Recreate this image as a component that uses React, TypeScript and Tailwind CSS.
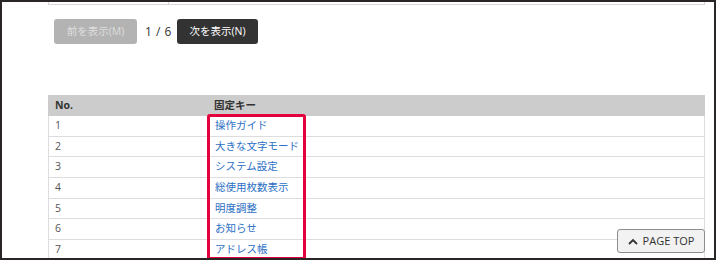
import React from "react";

const rows = [
  ["1", "操作ガイド"],
  ["2", "大きな文字モード"],
  ["3", "システム設定"],
  ["4", "総使用枚数表示"],
  ["5", "明度調整"],
  ["6", "お知らせ"],
  ["7", "アドレス帳"],
];

export default function App() {
  return (
    <div
      className="w-[718px] h-[262px] bg-white"
      style={{ fontFamily: '"Open Sans", "Noto Sans CJK JP", sans-serif' }}
    >
      <div className="relative w-[716px] h-[260px] border-2 border-[#2b2626] overflow-hidden">
        {/* remnant of the previous table */}
        <div className="ml-[46px] w-[657px] h-[3px] border-l border-r border-b border-[#d8d8d8] flex">
          <div className="w-[120px] border-r border-[#d8d8d8]" />
        </div>

        {/* pager */}
        <div className="flex items-center ml-[52px] mt-[14px] h-[25px] text-[10.5px]">
          <div className="w-[83px] h-[25px] rounded-[3px] bg-[#b3b3b3] text-[#dedede] flex items-center justify-center">
            前を表示(M)
          </div>
          <div className="ml-[8px] w-[32px] text-[#333] text-[12px] tracking-[0.5px]">1 / 6</div>
          <div className="w-[81px] h-[25px] rounded-[3px] bg-[#333333] text-white flex items-center justify-center">
            次を表示(N)
          </div>
        </div>

        {/* table */}
        <div className="relative ml-[46px] mt-[51px] w-[657px] text-[10.5px]">
          <div className="flex h-[21px] bg-[#cccccc] font-bold text-[#333]">
            <div className="w-[160px] pl-[7px] flex items-center">No.</div>
            <div className="flex-1 pl-[6px] flex items-center">固定キー</div>
          </div>
          {rows.map(([n, label]) => (
            <div
              key={n}
              className="flex h-[20.65px] border-b border-l border-r border-[#dddddd]"
            >
              <div className="w-[160px] pl-[6px] flex items-center text-[#555] border-r border-[#dddddd]">
                {n}
              </div>
              <div className="flex-1 pl-[6px] flex items-center text-[#2c6fc4]">
                {label}
              </div>
            </div>
          ))}
          <div className="absolute left-[159px] top-[19px] w-[99px] h-[146px] border-[3px] border-[#e3003c] rounded-[3px]" />
        </div>

        {/* page top */}
        <div className="absolute left-[615px] top-[227px] w-[88px] h-[24px] rounded-[3px] border border-[#8c8c8c] bg-[#f2f2f2] flex items-center justify-center gap-[5px] text-[11px] text-[#333]">
          <svg width="10" height="7" viewBox="0 0 10 7">
            <path d="M1 6 L5 2 L9 6" fill="none" stroke="#333" strokeWidth="1.8" />
          </svg>
          <span>PAGE TOP</span>
        </div>
      </div>
    </div>
  );
}
